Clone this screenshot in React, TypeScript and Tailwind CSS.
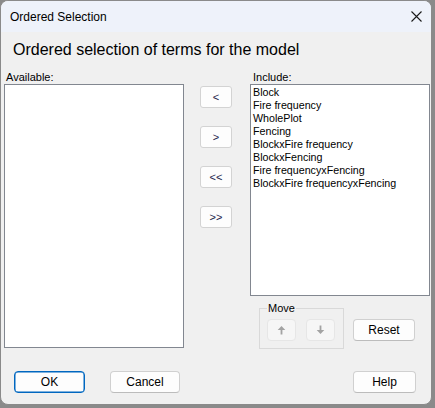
import React from 'react';

const terms = [
  'Block',
  'Fire frequency',
  'WholePlot',
  'Fencing',
  'BlockxFire frequency',
  'BlockxFencing',
  'Fire frequencyxFencing',
  'BlockxFire frequencyxFencing',
];

const ui = { fontFamily: '"Liberation Sans", Arial, sans-serif' };

function ArrowButton({ label }: { label: string }) {
  return (
    <button className="w-[32px] h-[22px] rounded-[3px] border border-[#d3d3d3] bg-[#fdfdfd] text-[11px] leading-none text-[#1c1c4a] flex items-center justify-center">
      {label}
    </button>
  );
}

function DialogButton({ label, primary = false, width }: { label: string; primary?: boolean; width: string }) {
  return (
    <button
      className={`${width} h-[22px] rounded-[4px] bg-[#fdfdfd] text-[12px] leading-none text-black flex items-center justify-center ${
        primary ? 'border border-[#0067c0] shadow-[inset_0_0_0_0.5px_#0067c0]' : 'border border-[#d0d0d0] border-b-[#bcbcbc]'
      }`}
    >
      {label}
    </button>
  );
}

function MoveArrow({ down = false }: { down?: boolean }) {
  return (
    <svg width="9" height="10" viewBox="0 0 9 10" className={down ? 'rotate-180' : ''}>
      <path d="M4.5 1 L8.3 5 L5.4 5 L5.4 9.5 L3.6 9.5 L3.6 5 L0.7 5 Z" fill="#a3a3a3" />
    </svg>
  );
}

export default function App() {
  return (
    <div className="w-[435px] h-[408px] bg-[#8a8a8a]" style={ui}>
      <div className="w-[432px] h-[405px] rounded-[8px] border border-[#8a8a8a] overflow-hidden flex flex-col bg-[#f0f0f0]">
        {/* 타이틀 바 */}
        <div className="h-[31px] shrink-0 bg-[#eef2fa] flex items-center justify-between pl-[9px] pr-[9px]">
          <span className="text-[12px] text-black">Ordered Selection</span>
          <svg width="11" height="11" viewBox="0 0 11 11">
            <path d="M0.5 0.5 L10.5 10.5 M10.5 0.5 L0.5 10.5" stroke="#1a1a1a" strokeWidth="1.1" />
          </svg>
        </div>

        {/* 본문 */}
        <div className="flex-1 flex flex-col pl-[3px]">
          <h1 className="mt-[8px] ml-[9px] h-[20px] text-[16px] leading-[20px] text-black">
            Ordered selection of terms for the model
          </h1>

          <div className="mt-[11px] flex">
            {/* Available */}
            <div className="w-[180px] flex flex-col">
              <span className="h-[13px] ml-[2px] text-[11px] leading-[13px] text-black">Available:</span>
              <div className="h-[264px] border border-[#828790] bg-white" />
            </div>

            {/* 이동 버튼 */}
            <div className="ml-[16px] mt-[15px] flex flex-col gap-[18px]">
              <ArrowButton label="<" />
              <ArrowButton label=">" />
              <ArrowButton label="<<" />
              <ArrowButton label=">>" />
            </div>

            {/* Include */}
            <div className="ml-[18px] w-[180px] flex flex-col">
              <span className="h-[13px] ml-[3px] text-[11px] leading-[13px] text-black">Include:</span>
              <div className="h-[212px] border border-[#828790] bg-white pt-[1px] pl-[2px]">
                {terms.map((t) => (
                  <div key={t} className="text-[10.7px] leading-[13px] text-black whitespace-nowrap">
                    {t}
                  </div>
                ))}
              </div>

              <div className="mt-[12px] flex items-start">
                <div className="relative ml-[9px] w-[85px] h-[41px] border border-[#d9d9d9] flex gap-[10px] pl-[7px] pt-[10px]">
                  <span className="absolute left-[7px] top-[-7px] bg-[#f0f0f0] px-px text-[11px] leading-[13px] text-black">
                    Move
                  </span>
                  <button className="w-[29px] h-[22px] rounded-[4px] border border-[#e6e6e6] bg-[#f6f6f6] flex items-center justify-center">
                    <MoveArrow />
                  </button>
                  <button className="w-[29px] h-[22px] rounded-[4px] border border-[#e6e6e6] bg-[#f6f6f6] flex items-center justify-center">
                    <MoveArrow down />
                  </button>
                </div>
                <div className="ml-[9px] mt-[11px]">
                  <DialogButton label="Reset" width="w-[62px]" />
                </div>
              </div>
            </div>
          </div>

          {/* 하단 버튼 */}
          <div className="mt-[22px] flex items-center">
            <div className="ml-[10px]">
              <DialogButton label="OK" primary width="w-[71px]" />
            </div>
            <div className="ml-[25px]">
              <DialogButton label="Cancel" width="w-[70px]" />
            </div>
            <div className="ml-auto mr-[15px]">
              <DialogButton label="Help" width="w-[63px]" />
            </div>
          </div>
        </div>
      </div>
    </div>
  );
}
